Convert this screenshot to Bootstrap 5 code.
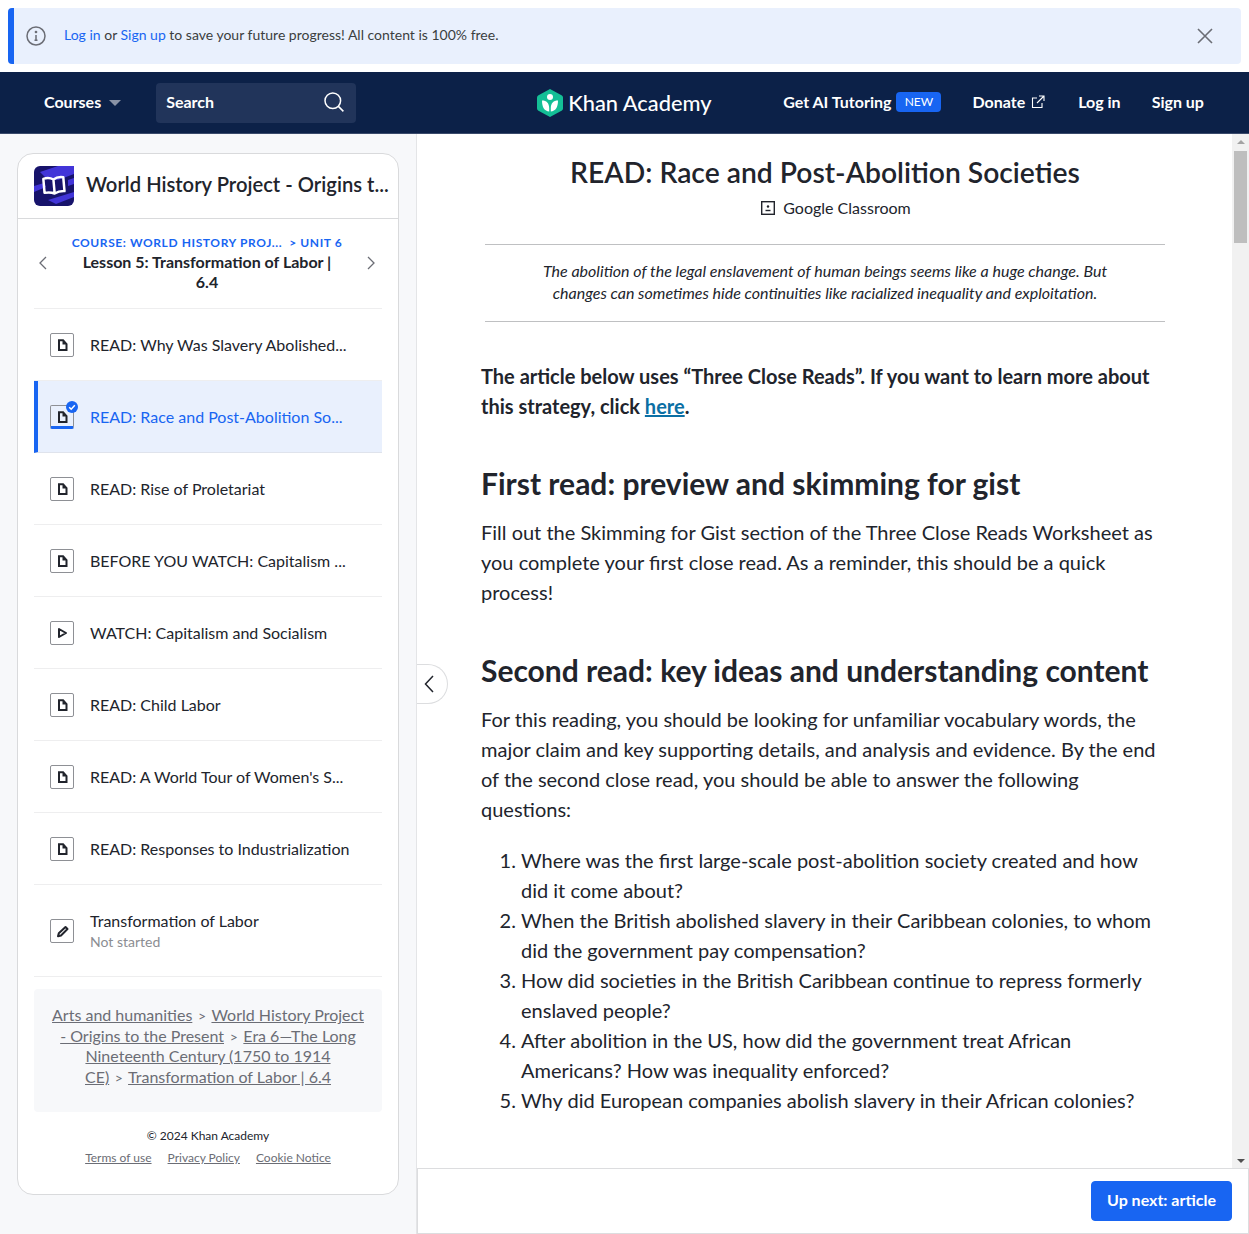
<!DOCTYPE html>
<html lang="en">
<head>
  <meta charset="UTF-8" />
  <title>READ: Race and Post-Abolition Societies</title>
  <link href="https://cdn.jsdelivr.net/npm/bootstrap@5.3.0/dist/css/bootstrap.min.css" rel="stylesheet">
  <style>
    html, body { height: 100%; }
    body {
      height: 1234px;
      overflow: hidden;
      background: #fff;
      font-family: Lato, "Liberation Sans", sans-serif;
      color: #21242c;
      font-size: 16px;
    }
    .ka-banner {
      height: 56px;
      margin: 8px 8px 8px 8px;
      background: #e9f0fd;
      border-left: 6px solid #1865f2;
      border-radius: 4px;
      padding: 0 28px 0 12px;
      font-size: 14px;
      color: #3b3e40;
    }
    .ka-banner a { color: #1865f2; text-decoration: none; }
    .ka-banner-text { margin-left: 18px; margin-top: -4px; }
    .ka-nav {
      height: 62px;
      padding: 0 0 2px 44px;
      background: #0c2148;
      border-bottom: 1px solid #3a4a6b;
      flex-wrap: nowrap;
      justify-content: flex-start;
      color: #fff;
      font-weight: 700;
      white-space: nowrap;
    }
    .ka-nav a { color: #fff; text-decoration: none; }
    .ka-nav > * { flex-shrink: 0; }
    .ka-caret { width: 0; height: 0; border-left: 6px solid transparent; border-right: 6px solid transparent; border-top: 6px solid #8a93a6; margin-left: 8px; margin-top: 2px; }
    .ka-search {
      width: 200px; height: 40px; margin-left: 35px; margin-top: 2px;
      background: #21345a; border-radius: 4px; padding: 0 12px 2px 10px;
    }
    .ka-logo { margin-left: 180px; width: 247px; margin-top: 2px; }
    .ka-logo-text { font-size: 21.800px; font-weight: 500; margin-left: 4px; line-height: 1; }
    .ka-new { background: #1865f2; border-radius: 4px; width: 45px; height: 20px; font-size: 12px; font-weight: 400; margin-left: 5px; }
    .ka-donate { margin-left: 31px; }
    .ka-ext { margin-left: 6px; }
    .ka-login { margin-left: 33px; }
    .ka-signup { margin-left: 31px; }
    .ka-page { height: 1100px; }
    .ka-side { width: 417px; flex: none; background: #f7f8fa; padding: 19px 17px 0 17px; border-right: 1px solid #e4e5e7; }
    .ka-card { height: 1042px; border: 1px solid #d9dadc; border-radius: 16px; background: #fff; overflow: hidden; --bs-card-border-radius: 16px; }
    .ka-card-head { height: 65px; padding: 0 8px 0 16px; border-bottom: 1px solid #d9dadc; }
    .ka-course { font-size: 20.200px; font-weight: 600; margin-left: 12px; margin-top: -3px; white-space: nowrap; }
    .ka-side-body { padding: 0 16px; }
    .ka-lesson { height: 89px; padding: 16px 0 0; }
    .ka-chev { margin-top: 21px; flex: none; }
    .ka-chev-next { margin-right: 6px; }
    .ka-crumbline { font-size: 12px; font-weight: 700; color: #1865f2; line-height: 16px; letter-spacing: .6px; white-space: nowrap; }
    .ka-lesson-title { font-weight: 700; line-height: 20px; width: 260px; font-size: 16px; margin-top: 1px; }
    .ka-lesson-mid { flex: 1; text-align: center; }
    .ka-list { --bs-list-group-border-color: #eeeeef; --bs-list-group-border-radius: 0; --bs-list-group-bg: transparent; }
    .ka-item { height: 72px; padding: 0 0 0 16px; border-left: 0; border-right: 0; border-bottom: 1px solid #eeeeef; color: #21242c; }
    .list-group-item.ka-item + .ka-item { border-top-width: 0; }
    .ka-item:first-child { border-top: 1px solid #eeeeef; height: 73px; }
    .ka-item.ka-current { background: #e9f0fd; border-left: 4px solid #1865f2; padding-left: 12px; color: #1865f2; border-bottom-color: #dfe3ec; }
    .ka-item.ka-tall { height: 92px; }
    .ka-ico { width: 24px; height: 24px; flex: none; border: 1px solid #8e9095; border-radius: 2px; background: #fff; margin-right: 16px; position: relative; }
    .ka-ico svg { display: block; margin: -1px; }
    .ka-current .ka-ico { background: transparent; border-bottom: 3px solid #1865f2; height: 24px; }
    .ka-tick { position: absolute; top: -4px; right: -4px; width: 12px; height: 12px; }
    .ka-sub { font-size: 14px; color: #8b8d92; line-height: 18px; margin-top: 2px; }
    .ka-item-title { line-height: 20px; }
    .ka-trail { margin-top: 12px; height: 123px; background: #f7f8fa; border-radius: 4px; padding: 16px 16px 0; text-align: center; line-height: 20.700px; color: #6b6d75; }
    .ka-trail a { color: #6b6d75; }
    .ka-trail i { font-style: normal; font-size: 14px; margin: 0 1.500px; line-height: 1; }
    .ka-legal { font-size: 12px; text-align: center; margin-top: 16px; line-height: 16px; }
    .ka-legal-links { margin-top: 6px; gap: 16px; }
    .ka-legal a { color: #6b6d75; }
    .ka-main { flex: 1; min-width: 0; position: relative; }
    .ka-scroll { height: 1034px; overflow: hidden; }
    .ka-article { flex: 1; padding: 21px 63px 0 64px; overflow: hidden; }
    .ka-title { font-size: 28.280px; font-weight: 600; text-align: center; margin: 0; line-height: 34px; }
    .ka-gc { margin-top: 7px; padding-left: 22px; line-height: 24px; }
    .ka-gc svg { margin-right: 8px; }
    .ka-intro { margin: 24px 4px 0; padding: 15px 40px 17px; border-top: 1px solid #bfc0c2; border-bottom: 1px solid #bfc0c2; font-style: italic; text-align: center; line-height: 22px; }
    .ka-body { font-size: 20px; line-height: 30px; }
    .ka-body p { margin: 0; }
    .ka-body p.ka-lead { font-weight: 700; margin: 39px 0 0; }
    .ka-lead a { color: #0b6fa4; }
    .ka-body h2 { font-size: 30px; font-weight: 700; line-height: 36px; margin: 45px 0 16px; }
    .ka-body .ka-lead + h2 { margin-top: 44px; }
    .ka-body ol { margin: 21px 0 0; padding-left: 40px; }
    .ka-bar { width: 17px; flex: none; background: #f1f1f1; }
    .ka-arrow-up { width: 0; height: 0; margin: 6px auto 0; border: 4px solid transparent; border-top: 0; border-bottom: 4px solid #a3a3a3; }
    .ka-thumb { height: 92px; margin: 7px 2px 0 2px; background: #bebebe; }
    .ka-arrow-down { width: 0; height: 0; margin: auto auto 5px; border: 4px solid transparent; border-bottom: 0; border-top: 4px solid #505050; }
    .ka-foot { height: 66px; border: 1px solid #dcdddf; padding-right: 16px; }
    .ka-next { --bs-btn-bg: #1865f2; --bs-btn-border-color: #1865f2; width: 141px; height: 40px; font-weight: 700; font-size: 16px; border-radius: 4px; padding: 0 0 2px; }
    .ka-fold { position: absolute; left: 0; top: 530px; width: 31px; height: 40px; background: #fff; border: 1px solid #dcdddf; border-left: 0; border-radius: 0 20px 20px 0; padding-right: 6px; }
  </style>
</head>
<body>
  <div class="ka-banner d-flex align-items-center">
    <svg width="20" height="20" viewBox="0 0 20 20" fill="none" stroke="#6b6d75" stroke-width="1.5"><circle cx="10" cy="10" r="9"/><path d="M10 9v5M8.5 14.2h3"/><circle cx="10" cy="6" r=".6" fill="#6b6d75"/></svg>
    <div class="ka-banner-text flex-grow-1"><a href="#">Log in</a> or <a href="#">Sign up</a> to save your future progress! All content is 100% free.</div>
    <svg width="16" height="16" viewBox="0 0 16 16" stroke="#6b6d75" stroke-width="1.6"><path d="M1 1l14 14M15 1L1 15"/></svg>
  </div>

  <nav class="navbar ka-nav d-flex align-items-center">
    <a href="#">Courses</a>
    <span class="ka-caret"></span>
    <div class="ka-search d-flex align-items-center justify-content-between">
      <span>Search</span>
      <svg width="20" height="20" viewBox="0 0 20 20" fill="none" stroke="#fff" stroke-width="1.5"><circle cx="8.8" cy="8.8" r="7.8"/><path d="M14.4 14.4l5 5"/></svg>
    </div>
    <div class="ka-logo d-flex align-items-center">
      <svg width="28" height="30" viewBox="0 0 28 30"><path d="M14 1l11.5 6.2c1 .6 1.5 1.5 1.5 2.6v10.4c0 1.1-.5 2-1.5 2.6L14 29 2.5 22.8C1.500 22.200 1 21.300 1 20.200V9.800c0-1.100.5-2 1.500-2.600z" fill="#14bf96"/><circle cx="14" cy="9" r="3" fill="#fff"/><path d="M6 12.500c4.500 0 7.200 2.600 7.200 7.800v3.200C8.500 23 6 19.500 6 12.500zM22 12.500c-4.500 0-7.200 2.600-7.200 7.800v3.200C19.500 23 22 19.500 22 12.500z" fill="#fff"/></svg>
      <span class="ka-logo-text">Khan Academy</span>
    </div>
    <a href="#">Get AI Tutoring</a>
    <span class="ka-new d-flex align-items-center justify-content-center">NEW</span>
    <a href="#" class="ka-donate">Donate</a>
    <svg class="ka-ext" width="14" height="14" viewBox="0 0 14 14" fill="none" stroke="#fff" stroke-width="1.1"><path d="M6 3H1.500v9.500H11V8M8 1h5v5M13 1L6 8"/></svg>
    <a href="#" class="ka-login">Log in</a>
    <a href="#" class="ka-signup">Sign up</a>
  </nav>

  <div class="ka-page d-flex">
    <aside class="ka-side">
      <div class="card ka-card">
        <div class="ka-card-head d-flex align-items-center">
          <svg width="40" height="40" viewBox="0 0 40 40" class="flex-shrink-0"><rect width="40" height="40" rx="6" fill="#17136b"/><path d="M6 6l18-6h16v8L24 14l-12-2zM0 20l10-3 2 4-12 5zM34 14l6-2v6l-6 2zM14 34l26-8v5L22 38z" fill="#4235d8"/><g transform="rotate(-5 20 20)" fill="none" stroke="#fff" stroke-width="2.500" stroke-linejoin="round"><path d="M10 12c4-1 7-.5 10 1.500v14c-3-1.500-6-2-10-1.500zM30 12c-4-1-7-.5-10 1.500v14c3-1.500 6-2 10-1.500z"/></g></svg>
          <div class="ka-course">World History Project - Origins t...</div>
        </div>
        <div class="ka-side-body">
          <div class="ka-lesson d-flex align-items-start">
            <svg class="ms-1 ka-chev" width="10" height="14" viewBox="0 0 10 14" fill="none" stroke="#6b6d75" stroke-width="1.300"><path d="M8 1L2 7l6 6"/></svg>
            <div class="ka-lesson-mid">
              <div class="ka-crumbline">COURSE: WORLD HISTORY PROJ... &nbsp;&gt;&nbsp;UNIT 6</div>
              <div class="ka-lesson-title mx-auto">Lesson 5: Transformation of Labor | 6.4</div>
            </div>
            <svg class="ka-chev ka-chev-next" width="10" height="14" viewBox="0 0 10 14" fill="none" stroke="#6b6d75" stroke-width="1.300"><path d="M2 1l6 6-6 6"/></svg>
          </div>
          <div class="list-group ka-list" id="itemList"></div>
          <div class="ka-trail">
            <a href="#">Arts and humanities</a> <i>&gt;</i> <a href="#">World History Project - Origins to the Present</a> <i>&gt;</i> <a href="#">Era 6—The Long Nineteenth Century (1750 to 1914 CE)</a>&nbsp;<i>&gt;</i>&nbsp;<a href="#">Transformation of Labor | 6.4</a>
          </div>
          <div class="ka-legal">
            <div>© 2024 Khan Academy</div>
            <div class="ka-legal-links d-flex justify-content-center">
              <a href="#">Terms of use</a><a href="#">Privacy Policy</a><a href="#">Cookie Notice</a>
            </div>
          </div>
        </div>
      </div>
    </aside>

    <main class="ka-main">
      <div class="ka-scroll d-flex">
        <article class="ka-article">
          <h1 class="ka-title">READ: Race and Post-Abolition Societies</h1>
          <div class="ka-gc d-flex align-items-center justify-content-center">
            <svg width="14" height="14" viewBox="0 0 14 14" fill="none" stroke="#21242c" stroke-width="1.400"><rect x=".7" y=".7" width="12.600" height="12.600"/><circle cx="7" cy="5.500" r="1.200" fill="#21242c" stroke="none"/><path d="M4.500 9.500h5"/></svg>
            Google Classroom
          </div>
          <div class="ka-intro">The abolition of the legal enslavement of human beings seems like a huge change. But changes can sometimes hide continuities like racialized inequality and exploitation.</div>
          <div class="ka-body">
            <p class="ka-lead">The article below uses “Three Close Reads”. If you want to learn more about this strategy, click <a href="#">here</a>.</p>
            <h2>First read: preview and skimming for gist</h2>
            <p>Fill out the Skimming for Gist section of the Three Close Reads Worksheet as you complete your first close read. As a reminder, this should be a quick process!</p>
            <h2>Second read: key ideas and understanding content</h2>
            <p>For this reading, you should be looking for unfamiliar vocabulary words, the major claim and key supporting details, and analysis and evidence. By the end of the second close read, you should be able to answer the following questions:</p>
            <ol>
              <li>Where was the first large-scale post-abolition society created and how did it come about?</li>
              <li>When the British abolished slavery in their Caribbean colonies, to whom did the government pay compensation?</li>
              <li>How did societies in the British Caribbean continue to repress formerly enslaved people?</li>
              <li>After abolition in the US, how did the government treat African Americans? How was inequality enforced?</li>
              <li>Why did European companies abolish slavery in their African colonies?</li>
            </ol>
          </div>
        </article>
        <div class="ka-bar d-flex flex-column">
          <div class="ka-arrow-up"></div>
          <div class="ka-thumb"></div>
          <div class="ka-arrow-down"></div>
        </div>
      </div>
      <div class="ka-foot d-flex align-items-center justify-content-end">
        <button class="btn btn-primary ka-next">Up next: article</button>
      </div>
      <div class="ka-fold d-flex align-items-center justify-content-center">
        <svg width="10" height="18" viewBox="0 0 10 18" fill="none" stroke="#21242c" stroke-width="1.500"><path d="M9 1L1.500 9 9 17"/></svg>
      </div>
    </main>
  </div>

  <script>
    const icons = {
      doc: '<path fill-rule="evenodd" d="M8 6.300h5.500l4 4.500v7.200H8zM10 8.300V16h5.500v-4.500h-3V8.300z" fill="#21242c"/>',
      play: '<path d="M9 8l7 4-7 4z" fill="none" stroke="#21242c" stroke-width="2" stroke-linejoin="round"/>',
      pen: '<path d="M15.500 8l2 2-6.500 6.500-3 .8.800-3z" fill="none" stroke="#21242c" stroke-width="2" stroke-linejoin="round"/>'
    };
    const items = [
      { title: 'READ: Why Was Slavery Abolished...', icon: 'doc' },
      { title: 'READ: Race and Post-Abolition So...', icon: 'doc', current: true },
      { title: 'READ: Rise of Proletariat', icon: 'doc' },
      { title: 'BEFORE YOU WATCH: Capitalism ...', icon: 'doc' },
      { title: 'WATCH: Capitalism and Socialism', icon: 'play' },
      { title: 'READ: Child Labor', icon: 'doc' },
      { title: "READ: A World Tour of Women's S...", icon: 'doc' },
      { title: 'READ: Responses to Industrialization', icon: 'doc' },
      { title: 'Transformation of Labor', icon: 'pen', sub: 'Not started' }
    ];
    const tick = '<svg class="ka-tick" viewBox="0 0 12 12"><circle cx="6" cy="6" r="6" fill="#1865f2"/><path d="M3.200 6.200l2 2 3.600-4" fill="none" stroke="#fff" stroke-width="1.500"/></svg>';
    const list = document.getElementById('itemList');
    items.forEach(it => {
      const row = document.createElement('a');
      row.href = '#';
      row.className = 'list-group-item d-flex align-items-center text-decoration-none ka-item' +
        (it.current ? ' ka-current' : '') + (it.sub ? ' ka-tall' : '');
      row.innerHTML = `
        <span class="ka-ico"><svg width="24" height="24" viewBox="0 0 24 24">${icons[it.icon]}</svg>${it.current ? tick : ''}</span>
        <span><div class="ka-item-title">${it.title}</div>${it.sub ? `<div class="ka-sub">${it.sub}</div>` : ''}</span>`;
      list.appendChild(row);
    });
  </script>
  <script src="https://cdn.jsdelivr.net/npm/bootstrap@5.3.0/dist/js/bootstrap.bundle.min.js"></script>
</body>
</html>
